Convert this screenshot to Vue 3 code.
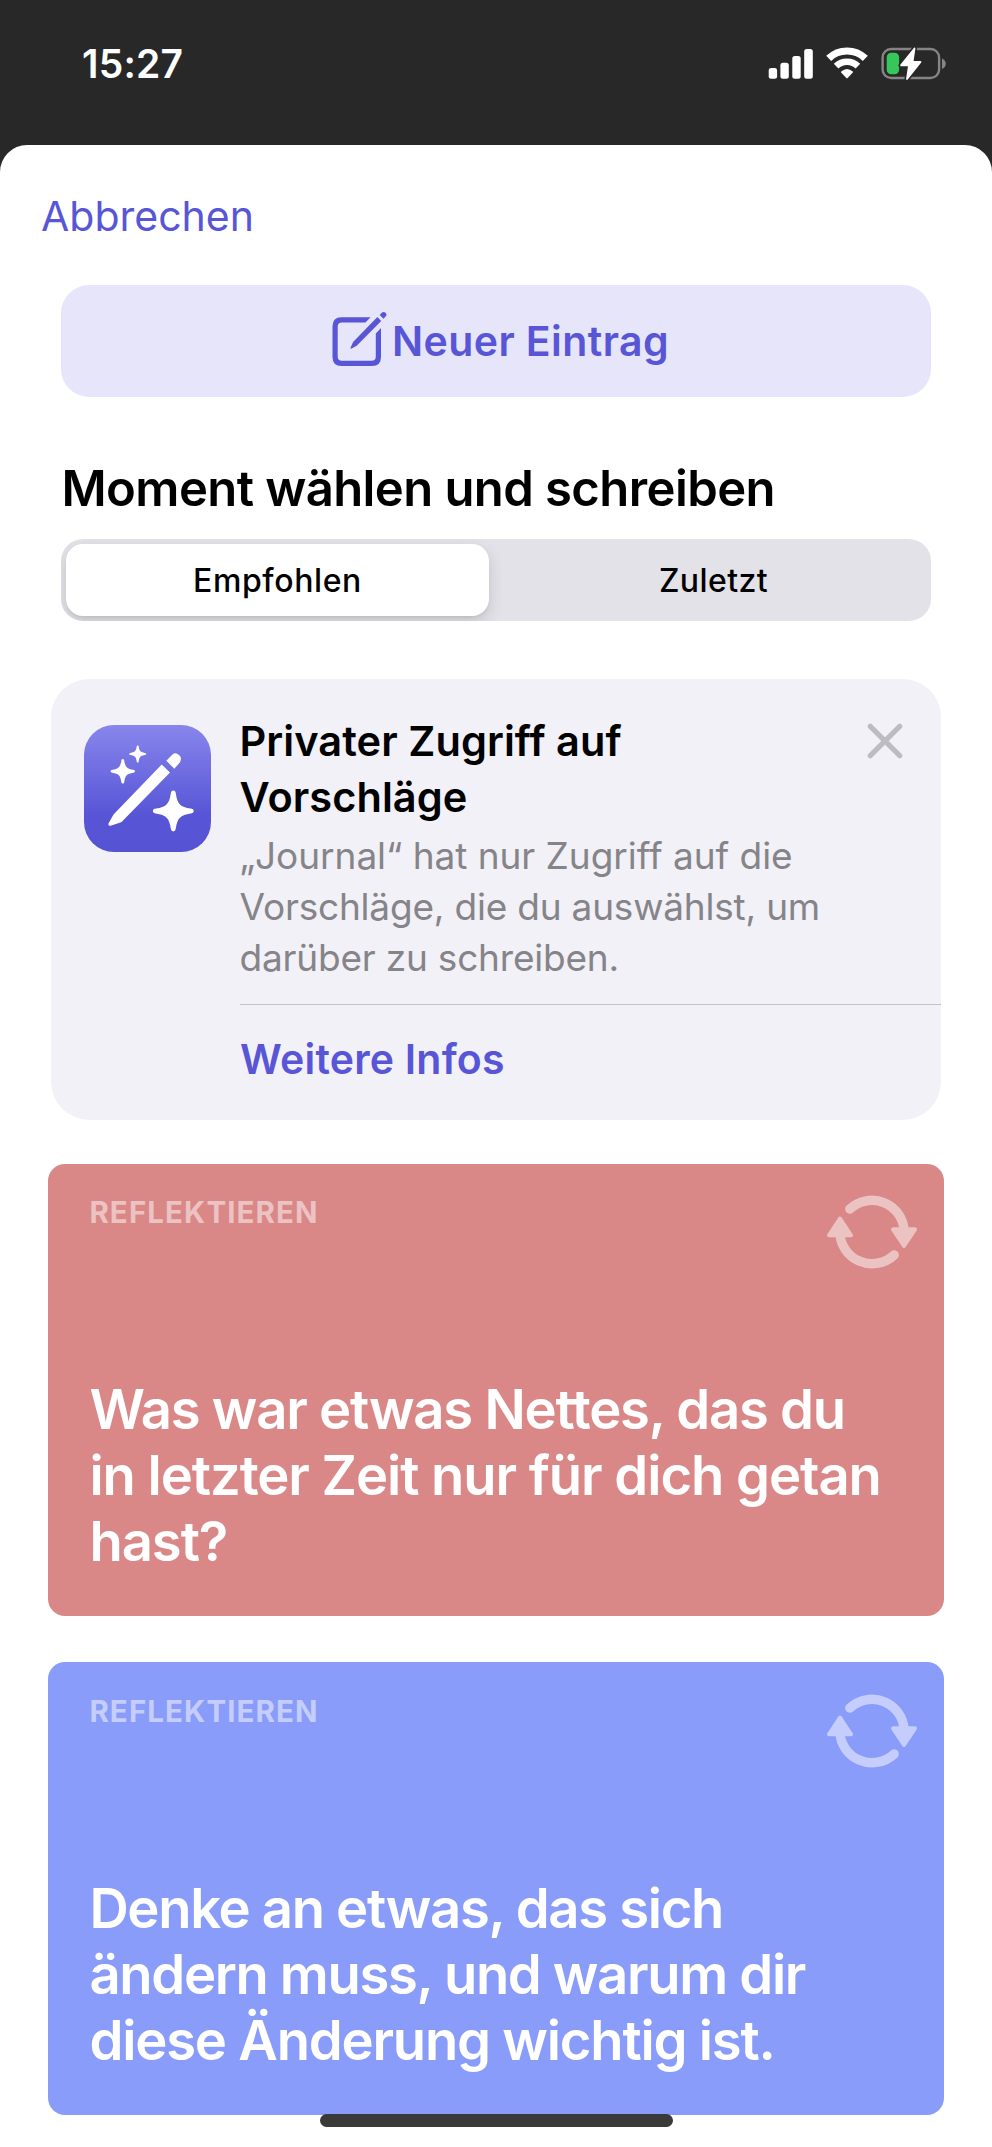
<script setup>
const prompts = [
  { tone: 'rose', label: 'REFLEKTIEREN', lines: ['Was war etwas Nettes, das du', 'in letzter Zeit nur für dich getan', 'hast?'] },
  { tone: 'blue', label: 'REFLEKTIEREN', lines: ['Denke an etwas, das sich', 'ändern muss, und warum dir', 'diese Änderung wichtig ist.'] },
]
const star =
  'M0-20C1.5-20 2.2-18.8 2.5-17C4-7 7-4 17-2.5C18.8-2.2 20-1.5 20 0S18.8 2.2 17 2.5C7 4 4 7 2.5 17C2.2 18.8 1.5 20 0 20S-2.2 18.8-2.5 17C-4 7-7 4-17 2.5C-18.8 2.2-20 1.5-20 0S-18.8-2.2-17-2.5C-7-4-4-7-2.5-17C-2.2-18.8-1.5-20 0-20Z'
</script>

<template>
  <div class="screen">
    <header class="status">
      <span class="time">15:27</span>
      <div class="indicators">
        <svg class="signal" width="46" height="34" viewBox="768 46 46 34" fill="#fff">
          <rect x="768.7" y="67" width="8.4" height="10.7" rx="2.5" />
          <rect x="780.4" y="61.7" width="8.4" height="16" rx="2.5" />
          <rect x="792.3" y="55" width="8.4" height="22.7" rx="2.5" />
          <rect x="804.2" y="48" width="8.6" height="29.7" rx="2.5" />
        </svg>
        <svg class="wifi" width="42" height="34" viewBox="826 46 42 34" fill="none" stroke="#fff">
          <path d="M828.7 57.4A26.3 26.3 0 0 1 865.3 57.4" stroke-width="7.2" />
          <path d="M836.1 65.2A15.6 15.6 0 0 1 857.9 65.2" stroke-width="6.6" />
          <path d="M841.2 70.6Q847 65.4 852.8 70.6Q853.2 71 852.8 71.5L847.7 77Q847 77.7 846.3 77L841.2 71.5Q840.8 71 841.2 70.6Z" fill="#fff" stroke="none" />
        </svg>
        <svg class="battery" width="65" height="34" viewBox="881 46 65 34">
          <rect x="882.6" y="48" width="56.5" height="29" rx="8.5" fill="none" stroke="#858585" stroke-width="2.4" />
          <path d="M942 57.5Q945.8 59.5 945.8 62.7T942 68Z" fill="#858585" />
          <rect x="886.7" y="51.8" width="12.4" height="21.4" rx="4.5" fill="#35c759" />
          <path d="M914.5 47.5L901 64.3H909L907 78L920.5 61H912.5Z" fill="#fff" stroke="#282828" stroke-width="5" stroke-linejoin="round" />
          <path d="M914.5 47.5L901 64.3H909L907 78L920.5 61H912.5Z" fill="#fff" stroke="#fff" stroke-width="1.8" stroke-linejoin="round" />
        </svg>
      </div>
    </header>

    <main class="sheet">
      <a class="cancel">Abbrechen</a>

      <button class="new-entry">
        <svg width="56" height="56" viewBox="0 0 56 56" fill="#5856d6">
          <path d="M38.5 6.3H9.5Q.5 6.3 .5 15.3V46Q.5 55 9.5 55H40Q49 55 49 46V17L43.8 22.5V45.5Q43.8 49.8 39.5 49.8H10Q5.7 49.8 5.7 45.5V15.8Q5.7 11.5 10 11.5H33.5Z" />
          <path d="M45.4 6.1L49.2 9.9L24.7 34.8L19.6 37.6Q18.2 38 18.6 36.4L21.1 31.1Z" />
          <path d="M47.7 4.1L50 1.6Q51.9 .2 53.7 1.9T53.8 5.3L51.5 7.8Z" />
        </svg>
        <span>Neuer Eintrag</span>
      </button>

      <h1 class="heading">Moment wählen und schreiben</h1>

      <div class="segments">
        <div class="segment active">Empfohlen</div>
        <div class="segment recent">Zuletzt</div>
      </div>

      <section class="notice">
        <svg class="notice-icon" width="127" height="127" viewBox="0 0 127 127">
          <defs>
            <linearGradient id="wand" x1="0" y1="0" x2="0" y2="1">
              <stop offset="0" stop-color="#8886ec" />
              <stop offset=".7" stop-color="#5856d6" />
              <stop offset="1" stop-color="#5553d3" />
            </linearGradient>
          </defs>
          <rect width="127" height="127" rx="30" fill="url(#wand)" />
          <g fill="#fff">
            <path d="M77.7 39.5L86 47.5L39 95.5Q38 96.8 36.5 97.5L26.5 100.7Q23.7 101.2 24.5 98.5L29.5 89.5Z" />
            <path d="M82.3 35.7L88.5 29.5Q91.5 27 95 30T95.8 37.5L90.3 43.7Z" />
            <path :d="star" transform="translate(89.3 86) scale(1.02)" />
            <path :d="star" transform="translate(38.8 46.3) scale(.61)" />
            <path :d="star" transform="translate(53.7 29) scale(.42)" />
          </g>
        </svg>
        <div class="notice-body">
          <div class="notice-head">
            <h2>Privater Zugriff auf<br />Vorschläge</h2>
            <svg class="close" width="36" height="36" viewBox="0 0 36 36" stroke="#bdbcc2" stroke-width="5.2" stroke-linecap="round">
              <path d="M3.3 3.3L32.7 32.7M32.7 3.3L3.3 32.7" />
            </svg>
          </div>
          <p><span class="lead">„Journal“ hat nur Zugriff auf die</span><br />Vorschläge, die du auswählst, um<br />darüber zu schreiben.</p>
          <div class="more">Weitere Infos</div>
        </div>
      </section>

      <article v-for="p in prompts" :key="p.tone" class="prompt" :class="p.tone">
        <div class="prompt-top">
          <span class="label">{{ p.label }}</span>
          <svg class="refresh" width="90" height="76" viewBox="-45 -38 90 76">
            <g fill="none" stroke="#fff" stroke-width="9.4" stroke-linecap="round">
              <path d="M-22.2-23A32.3 32.3 0 0 1 32.2 0" />
              <path d="M22.2 23A32.3 32.3 0 0 1-32.2 0" />
            </g>
            <g fill="#fff" stroke="#fff" stroke-width="4" stroke-linejoin="round">
              <path d="M21-2.7H43L32 14Z" />
              <path d="M-21 3.3H-43L-32-13.4Z" />
            </g>
          </svg>
        </div>
        <p class="question"><span v-for="l in p.lines" :key="l" class="line">{{ l }}</span></p>
      </article>
      <div class="home"></div>
    </main>
  </div>
</template>

<style>
body { background: #282828; }
</style>

<style scoped>
.screen {
  position: relative;
  width: 992px;
  height: 2147px;
  overflow: hidden;
  background: #282828;
  font-family: Inter, "Liberation Sans", sans-serif;
}
h1, h2, p { margin: 0; }
.status {
  box-sizing: border-box;
  height: 145px;
  padding: 0 46px 18px 82px;
  display: flex;
  align-items: center;
  justify-content: space-between;
}
.time { color: #fff; font-size: 39px; font-weight: 600; letter-spacing: .2px; }
.indicators { display: flex; }
.wifi { margin-left: 12px; }
.battery { margin-left: 13px; }
svg { display: block; flex: none; }
.sheet {
  box-sizing: border-box;
  height: 2002px;
  padding: 46px 48px 0;
  border-radius: 27px 27px 0 0;
  background: #fff;
  display: flex;
  flex-direction: column;
}
.cancel {
  align-self: flex-start;
  margin-left: -7px;
  font-size: 41px;
  line-height: 50px;
  color: #5856d6;
}
.new-entry {
  box-sizing: border-box;
  flex: none;
  height: 112px;
  margin: 44px 13px 0;
  padding: 0 0 0 9px;
  border: 0;
  border-radius: 28px;
  background: #e6e5f9;
  display: flex;
  align-items: center;
  justify-content: center;
  gap: 4px;
  font: 600 41px/50px Inter, sans-serif;
  letter-spacing: .42px;
  color: #5856d6;
}
.new-entry svg { margin-bottom: 4px; }
.heading {
  margin: 62px 13px 0 13.5px;
  font-size: 49px;
  line-height: 60px;
  font-weight: 600;
  letter-spacing: -.58px;
  color: #000;
  white-space: nowrap;
}
.segments {
  box-sizing: border-box;
  flex: none;
  height: 82px;
  margin: 20px 13px 0;
  padding: 5px;
  border-radius: 22px;
  background: #e3e2e8;
  overflow: hidden;
  display: grid;
  grid-template-columns: 423px 1fr;
}
.segment {
  display: flex;
  align-items: center;
  justify-content: center;
  font-size: 32px;
  font-weight: 500;
  letter-spacing: .6px;
  color: #000;
}
.recent { padding-left: 12px; letter-spacing: .4px; }
.active {
  border-radius: 17px;
  background: #fff;
  box-shadow: 0 6px 16px rgba(0, 0, 0, .14), 0 2px 2px rgba(0, 0, 0, .05);
}
.notice {
  box-sizing: border-box;
  flex: none;
  height: 441px;
  margin: 58px 3px 0;
  padding: 34px 0 0 33px;
  border-radius: 38px;
  background: #f2f1f7;
  display: flex;
}
.notice-icon { margin-top: 12px; }
.notice-body { flex: 1; margin-left: 28.5px; }
.notice-head { display: flex; justify-content: space-between; }
.notice h2 { font-size: 41.5px; line-height: 56px; font-weight: 600; letter-spacing: .08px; color: #000; }
.close { margin: 10px 38px 0 0; }
.notice p { margin-top: 5px; font-size: 37px; line-height: 51px; letter-spacing: -.2px; color: #858489; white-space: nowrap; }
.lead { letter-spacing: -.04px; }
.more {
  margin-top: 21px;
  padding: 29px 0 0 .5px;
  border-top: 1px solid #c3c2c8;
  font-size: 41px;
  line-height: 50px;
  font-weight: 600;
  letter-spacing: .22px;
  color: #5856d6;
}
.prompt {
  box-sizing: border-box;
  flex: none;
  height: 452.5px;
  padding: 30.5px 27px 41.8px 41px;
  margin-right: .4px;
  margin-left: .4px;
  border-radius: 17px;
  display: flex;
  flex-direction: column;
  justify-content: space-between;
}
.rose { margin-top: 43.5px; background: #da8787; }
.blue { margin-top: 46px; background: #8a9cf9; }
.prompt-top { display: flex; justify-content: space-between; }
.label { font-size: 29.5px; line-height: 36px; font-weight: 700; letter-spacing: 1.1px; color: rgba(255, 255, 255, .5); }
.refresh { opacity: .5; }
.question { font-size: 54.4px; line-height: 66px; font-weight: 600; color: #fff; white-space: nowrap; }
.line { display: block; }
.rose .line { letter-spacing: -1.05px; }
.rose .line:first-child { letter-spacing: -1.22px; }
.blue .line { letter-spacing: -1.32px; }
.blue .line:last-child { letter-spacing: -1.2px; }
.home {
  position: absolute;
  left: 320px;
  top: 2114px;
  width: 353px;
  height: 12.5px;
  border-radius: 7px;
  background: #3a3a3a;
}
</style>
